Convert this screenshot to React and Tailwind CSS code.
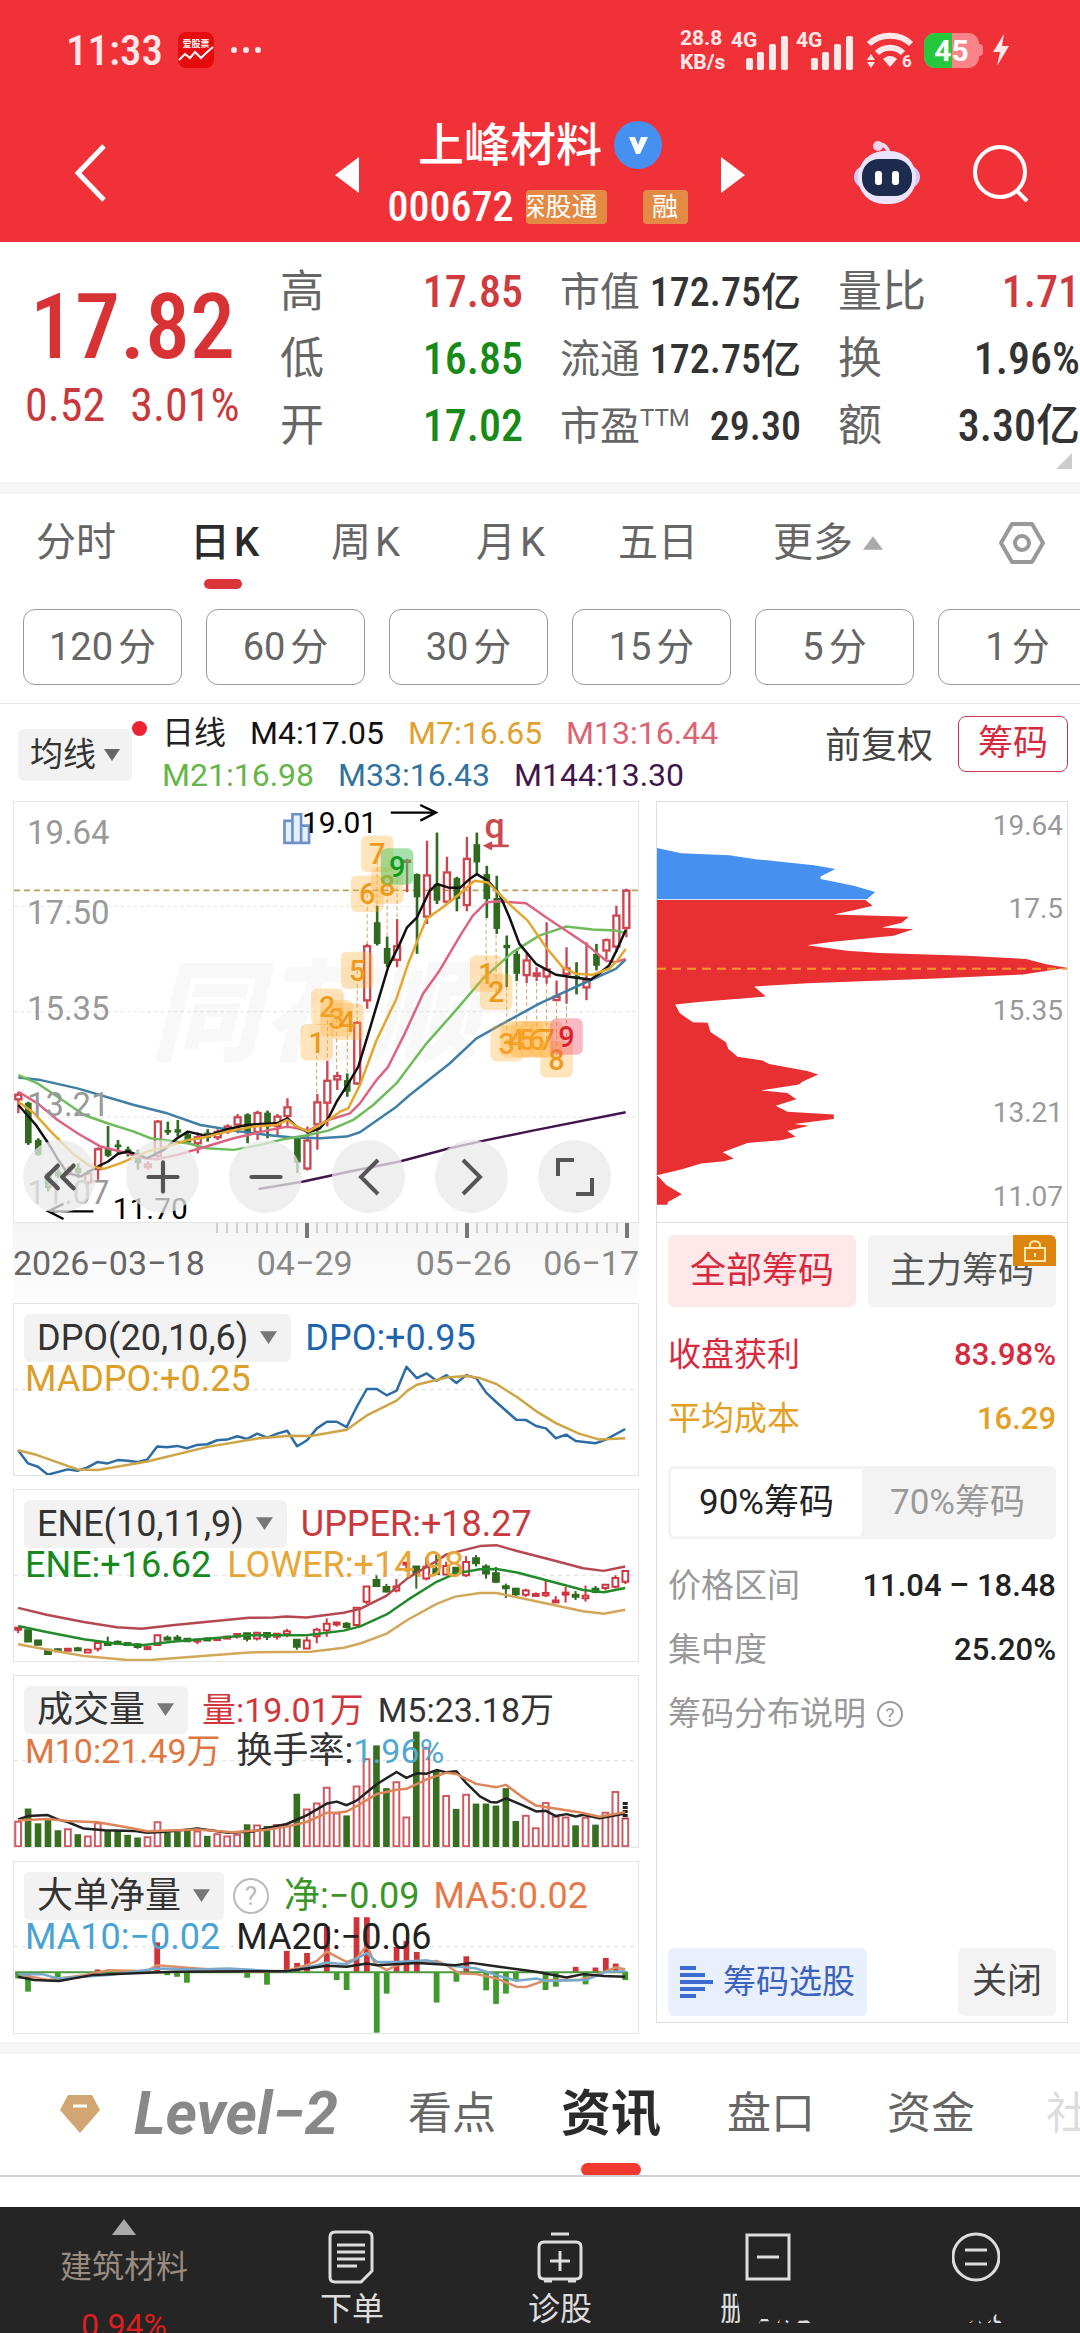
import { ChevronLeft, ChevronRight, ChevronsLeft, Plus, Minus } from "lucide-react";

// [up, high, bodyTop, bodyBottom, low]
const candles = [
  [1, 905, 912, 930, 970], [0, 935, 938, 1060, 1065], [0, 1045, 1050, 1095, 1098], [0, 1145, 1150, 1195, 1205],
  [0, 1135, 1145, 1160, 1165], [1, 1130, 1140, 1150, 1160], [0, 1120, 1135, 1150, 1165], [1, 1140, 1150, 1180, 1185],
  [1, 1072, 1076, 1140, 1170], [0, 1008, 1075, 1098, 1102], [0, 1050, 1064, 1072, 1090], [0, 1070, 1078, 1086, 1100],
  [0, 1080, 1090, 1120, 1140], [1, 1115, 1122, 1134, 1140], [1, 990, 993, 1100, 1104], [0, 995, 1020, 1028, 1035],
  [0, 990, 1018, 1028, 1040], [0, 1028, 1032, 1058, 1062], [1, 1028, 1040, 1062, 1090], [0, 1018, 1028, 1044, 1055],
  [1, 1018, 1024, 1044, 1050], [1, 1003, 1008, 1026, 1032], [1, 972, 980, 1006, 1030], [0, 970, 973, 1030, 1060],
  [1, 962, 967, 1028, 1050], [0, 962, 968, 1010, 1045], [1, 972, 978, 1010, 1040], [1, 925, 950, 980, 1015],
  [0, 1038, 1042, 1118, 1150], [1, 1010, 1050, 1138, 1142], [1, 912, 935, 1005, 1080], [1, 812, 870, 940, 1010],
  [1, 845, 856, 870, 900], [0, 850, 870, 905, 920], [1, 692, 696, 882, 885], [1, 460, 465, 632, 655],
  [0, 345, 395, 460, 465], [0, 438, 472, 520, 530], [1, 385, 465, 510, 530], [1, 204, 208, 212, 305],
  [0, 248, 250, 320, 490], [1, 150, 252, 380, 400], [0, 125, 280, 330, 340], [1, 198, 243, 335, 340],
  [0, 258, 262, 325, 362], [1, 138, 202, 345, 362], [0, 125, 160, 215, 250], [0, 225, 250, 325, 382],
  [0, 255, 322, 415, 430], [0, 435, 463, 473, 590], [0, 480, 490, 550, 572], [1, 490, 508, 556, 578],
  [1, 530, 547, 558, 572], [1, 395, 535, 560, 580], [1, 570, 617, 631, 633], [1, 470, 532, 552, 640],
  [0, 515, 556, 562, 612], [1, 455, 567, 593, 630], [0, 460, 490, 526, 540], [1, 444, 447, 482, 506],
  [1, 345, 373, 470, 485], [1, 294, 298, 414, 440],
];

const maLines = [
  { color: "#3e7fa3", points: "52,862 120,870 230,895 400,945 500,970 600,1005 720,1025 800,1035 870,1042 960,1045 1040,1040 1080,1027 1190,950 1230,915 1350,820 1430,745 1510,700 1620,640 1750,580 1850,535 1880,507" },
  { color: "#6ebb5b", points: "52,855 110,880 170,920 250,975 320,1000 400,1025 450,1045 560,1060 620,1075 700,1080 780,1065 850,1048 925,1035 985,1022 1060,990 1120,945 1190,880 1280,760 1360,670 1450,565 1540,485 1620,435 1700,408 1780,417 1850,420 1880,428" },
  { color: "#dc6482", points: "52,905 110,940 170,990 230,1030 300,1070 380,1090 430,1105 470,1108 530,1095 600,1075 700,1045 800,1022 862,1010 925,1022 985,990 1050,970 1080,940 1130,870 1165,830 1215,730 1270,610 1320,540 1385,430 1420,375 1460,335 1500,332 1580,338 1640,380 1700,420 1760,460 1820,510 1850,515 1880,505" },
  { color: "#111111", points: "52,945 105,1005 142,1060 172,1110 200,1150 240,1160 292,1130 322,1115 352,1092 382,1085 440,1105 490,1080 530,1045 562,1025 620,1038 680,1018 740,1005 780,1002 830,1000 862,985 890,1010 925,1027 960,1015 985,985 1010,935 1042,885 1075,830 1110,715 1165,530 1200,460 1222,410 1252,380 1290,300 1312,280 1345,290 1380,292 1410,265 1432,250 1465,270 1500,310 1530,380 1560,460 1610,520 1670,553 1730,562 1775,567 1800,550 1830,525 1855,475 1880,418" },
  { color: "#e3a72f", points: "52,935 100,970 150,1025 220,1095 270,1130 310,1137 360,1120 440,1085 500,1070 562,1050 600,1045 680,1025 760,1010 830,1005 862,990 890,1010 925,1025 985,990 1020,965 1045,955 1080,885 1130,750 1190,625 1225,520 1280,385 1330,350 1380,310 1425,270 1465,275 1500,310 1540,350 1585,390 1640,470 1690,530 1730,550 1780,553 1830,535 1855,510 1880,475" },
  { color: "#43154d", points: "775,1198 910,1175 1050,1145 1200,1115 1350,1075 1450,1053 1600,1022 1880,967" },
];

// [x, y, digit, tone, y of the candle it points at]
const marks = [
  [950, 757, "1", "o", 910], [982, 650, "2", "o", 810], [1010, 685, "3", "o", 845], [1042, 695, "4", "o", 850],
  [1072, 540, "5", "o", 690], [1102, 310, "6", "o", 460], [1132, 190, "7", "o", 345], [1162, 285, "8", "o", 438],
  [1192, 228, "9", "g", 385], [1460, 550, "1", "o", 380], [1490, 605, "2", "o", 430], [1522, 760, "3", "o", 590],
  [1552, 748, "4", "o", 572], [1582, 748, "5", "o", 578], [1612, 748, "6", "o", 572], [1642, 748, "7", "o", 580],
  [1672, 808, "8", "o", 633], [1702, 740, "9", "r", 640],
];

const volumes = [
  [1, 515], [0, 477], [0, 522], [0, 512], [0, 543], [1, 538], [0, 555], [1, 560], [1, 520], [0, 545], [0, 545],
  [0, 557], [0, 565], [1, 562], [1, 517], [0, 550], [0, 548], [0, 545], [1, 545], [0, 560], [1, 553], [1, 560],
  [1, 555], [0, 525], [1, 527], [0, 530], [1, 525], [1, 527], [0, 432], [1, 478], [1, 460], [1, 412], [1, 490],
  [0, 498], [1, 408], [1, 325], [0, 285], [0, 415], [1, 395], [1, 502], [0, 243], [1, 290], [0, 362], [1, 437],
  [0, 478], [1, 433], [0, 462], [0, 462], [0, 468], [0, 415], [0, 515], [1, 497], [1, 535], [1, 458], [1, 500],
  [1, 502], [0, 528], [1, 503], [0, 526], [1, 488], [1, 425], [1, 505],
];

const netOrders = [
  [41, 985], [65, 1025], [137, 990], [234, 958], [378, 876], [402, 975], [426, 980], [450, 998], [596, 983],
  [644, 1004], [692, 902], [717, 938], [741, 908], [789, 828], [813, 990], [837, 1020], [861, 800], [886, 800],
  [910, 1149], [934, 1031], [958, 890], [982, 872], [1007, 905], [1055, 1058], [1103, 995], [1127, 918],
  [1175, 1021], [1199, 1062], [1223, 1031], [1247, 990], [1319, 1020], [1344, 1010], [1392, 950], [1416, 1003],
  [1440, 952], [1465, 923], [1489, 940], [1512, 990],
];

const Line = ({ points, color, width = 2.5 }) => (
  <polyline points={points} fill="none" stroke={color} strokeWidth={width} strokeLinejoin="round" vectorEffect="non-scaling-stroke" />
);

const Caret = ({ className }) => (
  <svg viewBox="0 0 16 12" className={className} fill="currentColor"><path d="M0 0h16L8 12z" /></svg>
);

const CaretUp = ({ className }) => (
  <svg viewBox="0 0 24 16" className={className} fill="currentColor"><path d="M12 0l12 16H0z" /></svg>
);

const Signal = () => (
  <div className="relative w-[60px] h-[40px]">
    <span className="absolute left-0 top-0 text-[21px] leading-[20px] font-bold">4G</span>
    <svg viewBox="0 0 42 34" className="absolute left-[15px] bottom-0 w-[42px] h-[34px]" fill="currentColor">
      <rect x="0" y="22" width="7" height="12" rx="2" />
      <rect x="11" y="16" width="7" height="18" rx="2" />
      <rect x="23" y="8" width="7" height="26" rx="2" />
      <rect x="35" y="0" width="7" height="34" rx="2" />
    </svg>
  </div>
);

const StatusBar = () => (
  <div className="flex items-center h-[100px] pl-[66px] pr-[71px] text-[#ffe9e8]">
    <span className="font-['Roboto_Condensed','Roboto',sans-serif] text-[43px] leading-[44px] font-medium">11:33</span>
    <svg viewBox="0 0 36 36" className="w-[36px] h-[36px] ml-[15px]">
      <rect width="36" height="36" rx="8" fill="#e60b0d" />
      <text x="18" y="15" textAnchor="middle" fontSize="9" fontWeight="700" fill="#fff" fontFamily="Noto Sans CJK SC">爱股票</text>
      <path d="M1 28l6-6 5 4 5-6 6 6 5-5 7-6" fill="none" stroke="#fff" strokeWidth="2" />
    </svg>
    <svg viewBox="0 0 32 8" className="w-[32px] h-[8px] ml-[16px]" fill="currentColor">
      <circle cx="4" cy="4" r="3" /><circle cx="16" cy="4" r="3" /><circle cx="28" cy="4" r="3" />
    </svg>
    <div className="ml-auto flex items-center">
      <div className="w-[51px] text-[21px] leading-[24px] font-bold">28.8<br />KB/s</div>
      <Signal />
      <div className="w-[5px]" />
      <Signal />
      <svg viewBox="0 0 48 36" className="w-[48px] h-[36px] ml-[10px]" fill="none" stroke="currentColor" strokeWidth="6">
        <path d="M3 12C14 1 34 1 45 12" />
        <path d="M11 21C18 14 30 14 37 21" />
        <path d="M24 35l-7-8c4-4 10-4 14 0z" fill="currentColor" stroke="none" />
        <path d="M5 22l4 6H1zM5 36l4-6H1z" fill="currentColor" stroke="none" />
        <text x="36" y="35" fontSize="17" fontWeight="700" fill="currentColor" stroke="none" fontFamily="Roboto">6</text>
      </svg>
      <div className="relative w-[55px] h-[35px] ml-[10px] rounded-[11px] overflow-hidden bg-[#f9848a]">
        <div className="w-[28px] h-full bg-[#26c73d]" />
        <span className="absolute inset-0 text-center text-[30px] leading-[35px] font-bold text-white">45</span>
      </div>
      <div className="w-[4px] h-[12px] rounded-r bg-[#f9848a]" />
      <svg viewBox="0 0 16 32" className="w-[16px] h-[32px] ml-[10px]" fill="currentColor"><path d="M11 0L0 18h7l-3 14L16 12H9z" /></svg>
    </div>
  </div>
);

const TopBar = () => (
  <header className="bg-[#f13138] text-white">
    <StatusBar />
    <div className="flex items-center h-[142px] pt-[4px]">
      <button aria-label="返回" className="ml-[73px]">
        <svg viewBox="0 0 34 60" className="w-[34px] h-[60px]" fill="none" stroke="#fff" strokeWidth="5"><path d="M31 3L5 30l26 27" /></svg>
      </button>
      <button aria-label="上一只" className="ml-[228px] mt-[4px]">
        <svg viewBox="0 0 24 36" className="w-[24px] h-[36px]" fill="#fff"><path d="M24 0v36L0 18z" /></svg>
      </button>
      <div className="w-[362px] flex flex-col items-center">
        <div className="flex items-center gap-3 h-[60px]">
          <h1 className="text-[46px] leading-[60px] font-medium">上峰材料</h1>
          <svg viewBox="0 0 48 48" className="w-[48px] h-[48px]">
            <circle cx="24" cy="24" r="24" fill="#4691ef" />
            <path d="M15 16l7 17h4l8-17h-7l-3 8-3-8z" fill="#fff" />
          </svg>
        </div>
        <div className="flex items-center h-[48px] mt-[8px] -ml-[5px]">
          <span className="font-['Roboto_Condensed','Roboto',sans-serif] text-[42px] leading-[48px] font-medium">000672</span>
          <span className="ml-[12px] w-[81px] h-[34px] bg-[#e38b45] rounded-sm overflow-hidden flex justify-end pr-[9px] text-[26px] leading-[34px]"><span className="whitespace-nowrap">深股通</span></span>
          <span className="ml-[36px] w-[45px] h-[34px] bg-[#e38b45] rounded-sm text-center text-[26px] leading-[34px]">融</span>
        </div>
      </div>
      <button aria-label="下一只" className="mt-[4px]">
        <svg viewBox="0 0 24 36" className="w-[24px] h-[36px]" fill="#fff"><path d="M0 0v36l24-18z" /></svg>
      </button>
      <button aria-label="智能助手" className="ml-auto">
        <svg viewBox="0 0 66 64" className="w-[66px] h-[64px]">
          <path d="M24 3c6 0 10 4 11 10" fill="none" stroke="#efd9f5" strokeWidth="4" />
          <circle cx="24" cy="5" r="5" fill="#f6d3ea" />
          <rect x="0" y="25" width="66" height="22" rx="11" fill="#d9c9f8" />
          <rect x="4" y="10" width="58" height="53" rx="26" fill="#ece4ff" />
          <rect x="8" y="18" width="50" height="37" rx="17" fill="#1c2b4e" />
          <rect x="21" y="30" width="7" height="14" rx="3" fill="#fff" />
          <rect x="38" y="30" width="7" height="14" rx="3" fill="#fff" />
        </svg>
      </button>
      <button aria-label="搜索" className="ml-[52px] mr-[50px]">
        <svg viewBox="0 0 58 58" className="w-[58px] h-[58px]" fill="none" stroke="#fff" strokeWidth="4"><circle cx="28" cy="28" r="25" /><path d="M44 46l11 11" /></svg>
      </button>
    </div>
  </header>
);

const stats = [
  ["高", "17.85", "text-[#cf3b3f]", "市值", "172.75亿", "量比", "1.71", "text-[#cf3b3f]"],
  ["低", "16.85", "text-[#188a18]", "流通", "172.75亿", "换", "1.96%", "text-[#333]"],
  ["开", "17.02", "text-[#188a18]", "市盈", "29.30", "额", "3.30亿", "text-[#333]"],
];

const Quote = () => (
  <section className="relative flex h-[240px] border-b-12 border-[#f5f5f5] box-content border-solid font-['Roboto_Condensed','Roboto','Noto_Sans_CJK_SC',sans-serif]">
    <div className="w-[280px] shrink-0 pt-[40px] text-[#d93235]">
      <div className="pl-[30px] text-[90px] leading-[92px] font-medium">17.82</div>
      <div className="pl-[25px] mt-[6px] flex gap-[25px] text-[46px] leading-[50px] text-[#c9393c]"><span>0.52</span><span>3.01%</span></div>
    </div>
    <div className="flex-1 pt-[17px]">
      {stats.map(([a, av, ac, b, bv, c, cv, cc]) => (
        <div key={a} className="flex items-center h-[67px] text-[40px] leading-[67px] text-[#333]">
          <span className="text-[44px] text-[#666]">{a}</span>
          <span className={`flex-1 text-right text-[44px] font-medium ${ac}`}>{av}</span>
          <div className="w-[241px] ml-[37px] flex justify-between">
            <span className="flex text-[#666]">{b}{b === "市盈" && <span className="text-[24px] leading-[50px] font-['Roboto']">TTM</span>}</span>
            <span className="font-medium">{bv}</span>
          </div>
          <span className="w-[92px] ml-[37px] text-[44px] text-[#666]">{c}</span>
          <span className={`w-[150px] text-right text-[44px] font-medium ${cc}`}>{cv}</span>
        </div>
      ))}
    </div>
    <svg viewBox="0 0 16 16" className="absolute right-[8px] bottom-[13px] w-[16px] h-[16px]"><path d="M16 0v16H0z" fill="#ccc" /></svg>
  </section>
);

const PeriodTabs = () => (
  <nav className="flex items-center h-[97px] pl-[36px] text-[40px] leading-[60px] text-[#666]">
    <button className="w-[154px] text-left">分时</button>
    <button className="relative flex gap-[4px] w-[141px] font-medium text-[#2b2b2b]">
      <span>日</span><span>K</span>
      <span className="absolute left-[14px] top-[66px] w-[38px] h-[10px] rounded-full bg-[#da3538]" />
    </button>
    <button className="flex gap-[4px] w-[145px]"><span>周</span><span>K</span></button>
    <button className="flex gap-[4px] w-[142px]"><span>月</span><span>K</span></button>
    <button className="w-[155px] text-left">五日</button>
    <button className="flex items-center gap-[10px]">更多<CaretUp className="w-[20px] h-[16px] text-[#aaa]" /></button>
    <button aria-label="设置" className="ml-auto mr-[35px]">
      <svg viewBox="0 0 46 42" className="w-[46px] h-[42px]" fill="none" stroke="#999" strokeWidth="4" strokeLinejoin="round"><path d="M13 2h20l11 19-11 19H13L2 21z" /><circle cx="23" cy="21" r="7" /></svg>
    </button>
  </nav>
);

const MinuteChips = () => (
  <div className="flex gap-6 pl-[23px] pt-[18px] pb-[18px] overflow-hidden border-b border-[#e6e6e6]">
    {["120", "60", "30", "15", "5", "1"].map((m) => (
      <button key={m} className="flex justify-center gap-[5px] w-[159px] h-[76px] shrink-0 rounded-xl border border-[#999] text-[38px] leading-[74px] text-[#666]"><span>{m}</span><span>分</span></button>
    ))}
  </div>
);

const MaLegend = () => (
  <div className="flex h-[97px]">
    <div className="relative ml-[18px] mt-[25px] w-[114px] h-[52px]">
      <button className="w-full h-full flex items-center justify-center gap-2 rounded-md bg-[#f2f2f2] text-[33px] leading-[52px] text-[#333]">均线<Caret className="w-[16px] h-[12px] text-[#666]" /></button>
      <span className="absolute -right-[15px] -top-[8px] w-[15px] h-[15px] rounded-full bg-[#ec2330]" />
    </div>
    <div className="ml-[30px] mt-[8px] text-[32px] leading-[42px] whitespace-nowrap">
      <div className="flex gap-[24px]"><span className="text-[#222]">日线</span><span className="text-[#111]">M4:17.05</span><span className="text-[#dfa12f]">M7:16.65</span><span className="text-[#db6474]">M13:16.44</span></div>
      <div className="flex gap-[24px]"><span className="text-[#65b548]">M21:16.98</span><span className="text-[#31739e]">M33:16.43</span><span className="text-[#43154d]">M144:13.30</span></div>
    </div>
    <button className="ml-auto mt-[12px] h-[60px] text-[36px] leading-[60px] text-[#444]">前复权</button>
    <button className="ml-[25px] mr-[12px] mt-[12px] w-[110px] h-[56px] rounded-lg border border-[#c9394b] text-[35px] leading-[54px] text-[#d82a3e]">筹码</button>
  </div>
);

const markTones = {
  o: ["#ffb03a", "#ee9a1c", 0.34],
  g: ["#4ec45a", "#0f9d20", 0.5],
  r: ["#f0506a", "#e0212b", 0.4],
};

const roundBtn = "w-[73px] h-[73px] rounded-full bg-[#e9e9e9]/75 text-[#555] flex items-center justify-center";

const KChart = () => (
  <div className="relative border border-[#e4e4e4]">
    <svg viewBox="39 33 1878 1263" className="block w-full" fontFamily="Roboto, Noto Sans CJK SC, sans-serif">
      <text x="450" y="785" fontSize="330" fontWeight="900" fontStyle="italic" fill="#f8f8f8">同花顺</text>
      <g stroke="#d6d6d6" strokeWidth="2" strokeDasharray="12 8"><path d="M39 347h1878M39 664h1878M39 981h1878" /></g>
      <path d="M39 299h1878" stroke="#b79f5c" strokeWidth="5" strokeDasharray="18 12" />
      {marks.map(([x, y, n, , to]) => (
        <path key={x} d={`M${x} ${y}V${to}`} stroke="#cfa862" strokeWidth="3" strokeDasharray="12 8" />
      ))}
      {candles.map(([up, h, t, b, l], i) => {
        const x = 52 + i * 30;
        return up ? (
          <g key={i} stroke="#cb4650" strokeWidth="7" fill="none">
            <path d={`M${x} ${h}V${t}M${x} ${b}V${l}`} />
            <rect x={x - 9} y={t + 2} width="18" height={Math.max(b - t - 4, 3)} />
          </g>
        ) : (
          <g key={i} fill="#2f6a1f">
            <rect x={x - 4} y={h} width="8" height={l - h} />
            <rect x={x - 10} y={t} width="20" height={b - t} />
          </g>
        );
      })}
      {maLines.map((l) => <Line key={l.color} {...l} />)}
      {marks.map(([x, y, n, tone]) => (
        <g key={x}>
          <rect x={x - 49} y={y - 56} width="98" height="110" rx="18" fill={markTones[tone][0]} opacity={markTones[tone][2]} />
          <text x={x} y={y + 31} textAnchor="middle" fontSize="87" fontWeight="500" fill={markTones[tone][1]}>{n}</text>
        </g>
      ))}
      <g fontSize="99" fill="#999">
        <text x="78" y="160">19.64</text>
        <text x="78" y="400">17.50</text>
        <text x="78" y="688">15.35</text>
        <text x="78" y="979">13.21</text>
        <text x="78" y="1243">11.07</text>
      </g>
      <g fill="#e4f1ff" stroke="#6f8fcb" strokeWidth="8"><path d="M853 90h24v66h-24zM903 104h24v52h-24zM877 70h26v86h-26z" /></g>
      <text x="906" y="125" fontSize="90" fill="#000">19.01</text>
      <path d="M1173 65h135M1262 42l47 23-47 24" fill="none" stroke="#000" strokeWidth="7" />
      <text x="1455" y="142" fontSize="108" fontWeight="500" fill="#c94a52">q</text>
      <path d="M1528 165h-62" stroke="#c94a52" strokeWidth="8" /><path d="M1450 165l28-14v28z" fill="#c94a52" />
      <path d="M278 1265H142M188 1242l-46 23 46 23" fill="none" stroke="#000" strokeWidth="7" />
      <text x="336" y="1288" fontSize="90" fill="#000">11.70</text>
    </svg>
    <div className="absolute left-[9px] right-[27px] top-[338px] flex justify-between">
      <button aria-label="最左" className={roundBtn}><ChevronsLeft size={54} strokeWidth={2} /></button>
      <button aria-label="放大" className={roundBtn}><Plus size={50} strokeWidth={2} /></button>
      <button aria-label="缩小" className={roundBtn}><Minus size={50} strokeWidth={2} /></button>
      <button aria-label="左移" className={roundBtn}><svg viewBox="0 0 22 38" className="w-[22px] h-[38px]" fill="none" stroke="currentColor" strokeWidth="4"><path d="M20 2L3 19l17 17" /></svg></button>
      <button aria-label="右移" className={roundBtn}><svg viewBox="0 0 22 38" className="w-[22px] h-[38px]" fill="none" stroke="currentColor" strokeWidth="4"><path d="M2 2l17 17L2 36" /></svg></button>
      <button aria-label="全屏" className={roundBtn}>
        <svg viewBox="0 0 38 38" className="w-[38px] h-[38px]" fill="none" stroke="currentColor" strokeWidth="4"><path d="M2 18V2h16M36 20v16H20" /></svg>
      </button>
    </div>
  </div>
);

const DateAxis = () => (
  <div className="h-[80px] bg-linear-to-b from-[#f5f5f5] to-[#fdfdfd]">
    <svg viewBox="0 0 626 16" className="block w-full">
      {Array.from({ length: 42 }, (_, i) => {
        const big = i === 9 || i === 25 || i === 41;
        return <path key={i} d={`M${204 + i * 10} 0V${big ? 15 : 10}`} stroke={big ? "#777" : "#aaa"} strokeWidth={big ? 4 : 1} />;
      })}
    </svg>
    <div className="flex pt-[4px] text-[34px] leading-[40px] text-[#888] whitespace-nowrap">
      <span className="text-[#666]">2026−03−18</span>
      <span className="ml-[52px]">04−29</span>
      <span className="ml-[63px]">05−26</span>
      <span className="ml-auto">06−17</span>
    </div>
  </div>
);

const Panel = ({ name, viewBox, grid, line1, line2, help, valueSize = "text-[36px]", children }) => (
  <div className="relative h-[173px] border border-[#e4e4e4] text-[36px] whitespace-nowrap">
    <svg viewBox={viewBox} preserveAspectRatio="none" className="absolute inset-0 w-full h-full">
      <path d={`M31 ${grid}h1512`} stroke="#ddd" strokeDasharray="4 4" vectorEffect="non-scaling-stroke" />
      {children}
    </svg>
    <div className="relative flex items-center pl-[10px] pt-[10px]">
      <button className="flex items-center gap-[12px] h-[48px] pl-[13px] pr-[14px] rounded-md bg-[#f2f2f2] text-[#333] leading-[48px]">{name}<Caret className="w-[17px] h-[13px] text-[#777]" /></button>
      {help && <svg viewBox="0 0 38 38" className="w-[38px] h-[38px] ml-[8px]"><circle cx="19" cy="19" r="17" fill="none" stroke="#bbb" strokeWidth="2" /><text x="19" y="28" textAnchor="middle" fontSize="26" fill="#bbb" fontFamily="Roboto">?</text></svg>}
      <div className={`flex ml-[14px] gap-[14px] leading-[48px] ${valueSize}`}>{line1.map(([t, c]) => <span key={t} className={c}>{t}</span>)}</div>
    </div>
    <div className={`relative flex pl-[11px] gap-[16px] leading-[34px] ${valueSize}`}>{line2.map(([t, c]) => <span key={t} className={c}>{t}</span>)}</div>
  </div>
);

const px = (i) => 41 + i * 24.12;

const DpoPanel = () => (
  <Panel name="DPO(20,10,6)" viewBox="31 248 1512 517" grid={507} line1={[["DPO:+0.95", "text-[#1d66ad]"]]} line2={[["MADPO:+0.25", "text-[#dba02a]"]]}>
    <Line color="#2c6ca5" points="41,690 65,730 89,740 113,764 161,748 185,752 209,742 233,726 258,730 282,720 306,722 330,726 354,718 378,679 402,681 426,677 450,684 475,674 499,672 523,660 547,658 572,648 596,656 620,640 645,652 669,640 693,631 717,678 741,660 765,624 789,604 813,604 837,620 861,560 886,505 910,505 934,524 958,510 982,438 1007,472 1031,458 1055,480 1079,463 1103,487 1127,463 1151,472 1175,516 1200,545 1248,598 1272,599 1296,617 1320,624 1344,654 1369,643 1392,662 1440,669 1465,658 1512,626" />
    <Line color="#cda546" points="41,690 80,702 185,748 235,750 354,724 500,680 620,655 700,646 750,647 837,628 886,585 958,540 985,510 1007,492 1079,470 1127,466 1160,472 1200,490 1248,528 1300,575 1344,608 1400,640 1450,658 1512,654" />
  </Panel>
);

const EnePanel = () => (
  <Panel name="ENE(10,11,9)" viewBox="31 805 1512 518" grid={1063} line1={[["UPPER:+18.27", "text-[#c93a3f]"]]} line2={[["ENE:+16.62", "text-[#168a1d]"], ["LOWER:+14.98", "text-[#e8a637]"]]}>
    {candles.map(([up, h, t, b, l], i) => {
      const y = (v) => 1050 + (v - 297) * 0.28;
      const x = px(i);
      return (
        <g key={i} stroke={up ? "#cf3540" : "#2f6a1f"} fill={up ? "#fff" : "#2f6a1f"} strokeWidth="2">
          <path d={`M${x} ${y(h)}V${y(l)}`} vectorEffect="non-scaling-stroke" />
          <rect x={x - 7} y={y(t)} width="14" height={Math.max(y(b) - y(t), 6)} vectorEffect="non-scaling-stroke" />
        </g>
      );
    })}
    <Line color="#b5484f" points="41,1162 110,1183 200,1205 280,1221 340,1225 420,1214 600,1192 660,1191 690,1188 740,1191 830,1177 870,1165 934,1125 985,1072 1055,1020 1079,1000 1160,975 1200,972 1250,990 1344,1020 1410,1042 1460,1050 1512,1037" />
    <Line color="#238a2b" points="41,1217 110,1235 200,1257 280,1271 340,1275 420,1264 600,1245 740,1245 830,1231 870,1218 934,1182 985,1138 1055,1083 1100,1058 1160,1045 1200,1044 1250,1055 1344,1086 1410,1108 1460,1115 1512,1102" />
    <Line color="#d1a75a" points="41,1272 110,1288 200,1308 300,1319 360,1320 600,1297 750,1295 830,1283 870,1270 934,1240 985,1198 1055,1150 1100,1128 1160,1117 1200,1117 1250,1130 1344,1155 1410,1172 1460,1180 1512,1168" />
  </Panel>
);

const VolumePanel = () => (
  <Panel name="成交量" viewBox="31 74 1512 520" grid={332} valueSize="text-[34px]" line1={[["量:19.01万", "text-[#d0363c]"], ["M5:23.18万", "text-[#333]"]]} line2={[["M10:21.49万", "text-[#de7742]"], ["换手率:", "text-[#333] text-[36px]"], ["1.96%", "text-[#52a9d0] -ml-[16px]"]]}>
    {volumes.map(([up, y], i) =>
      up ? (
        <rect key={i} x={px(i) - 7} y={y + 2} width="14" height={590 - y} fill="#fff" stroke="#cf5a63" strokeWidth="2" vectorEffect="non-scaling-stroke" />
      ) : (
        <rect key={i} x={px(i) - 8} y={y} width="16" height={594 - y} fill="#386e20" />
      )
    )}
    <path d="M1512 457v50" stroke="#222" strokeWidth="5" strokeDasharray="3 1" vectorEffect="non-scaling-stroke" />
    <Line color="#222" points="41,510 65,500 113,497 137,510 161,518 200,538 250,543 320,545 354,551 400,548 475,538 550,551 610,547 650,535 692,524 740,498 789,462 813,456 837,467 861,453 910,403 958,366 982,384 1007,370 1031,371 1055,360 1079,367 1103,364 1127,400 1160,440 1185,457 1200,459 1223,446 1260,465 1296,486 1320,484 1344,500 1370,494 1392,501 1410,496 1450,507 1512,492" />
    <Line color="#dd8458" points="41,513 113,509 161,515 234,519 300,533 354,546 475,541 560,549 640,542 692,532 740,518 789,490 813,490 837,486 861,470 910,433 958,420 982,417 1031,388 1079,368 1103,372 1151,402 1200,412 1223,405 1260,440 1296,468 1400,488 1450,502 1512,488" />
  </Panel>
);

const NetOrderPanel = () => (
  <Panel name="大单净量" help viewBox="31 633 1512 517" grid={889} line1={[["净:−0.09", "text-[#3a9628]"], ["MA5:0.02", "text-[#e6794a]"]]} line2={[["MA10:−0.02", "text-[#4ba3d4]"], ["MA20:−0.06", "text-[#222]"]]}>
    {netOrders.map(([x, y]) => (
      <rect key={x} x={x - 7} y={Math.min(y, 966)} width="14" height={Math.abs(y - 966)} fill={y < 966 ? "#cf3338" : "#3f9a2c"} />
    ))}
    <path d="M34 966H1518" stroke="#4c9a3e" strokeWidth="2" vectorEffect="non-scaling-stroke" />
    <Line color="#dc8e66" points="41,972 113,990 200,975 260,960 354,963 378,945 475,955 600,965 692,962 740,945 765,932 789,903 813,920 837,935 861,925 886,885 905,940 934,960 958,945 1007,935 1055,932 1079,945 1110,970 1151,972 1200,985 1248,1010 1272,1011 1320,990 1400,990 1440,975 1489,952 1512,957" />
    <Line color="#78a9cb" points="41,972 100,972 137,985 260,975 378,955 475,958 550,955 690,965 765,945 789,937 813,940 837,942 886,908 910,935 958,935 1031,930 1079,945 1151,955 1200,975 1248,992 1296,985 1320,993 1416,990 1465,965 1512,963" />
    <Line color="#222" points="41,980 80,990 140,993 220,975 354,968 420,965 690,963 789,947 837,950 886,940 910,945 1007,938 1100,945 1140,938 1180,945 1296,965 1370,982 1410,972 1460,978 1512,980" />
  </Panel>
);

const Row = ({ label, value, labelColor, valueColor }) => (
  <div className="flex justify-between items-center h-16 text-[33px] leading-[64px]">
    <span className={labelColor}>{label}</span>
    <span className={`text-[31px] font-medium ${valueColor}`}>{value}</span>
  </div>
);

const ChipPanel = () => (
  <aside className="flex flex-col h-[1222px] border border-[#dedede]">
    <div className="relative h-[421px] border-b border-[#dedede]">
      <svg viewBox="47 321 1236 1222" preserveAspectRatio="none" className="absolute inset-0 w-full h-full">
        <path fill="#4691ef" d="M47 455L120 470 265 476 350 488 520 505 585 516 540 538 540 545 640 565 705 583 680 604H47z" />
        <path fill="#e83032" d="M47 606H675L697 623 640 636 580 648 806 655 785 672 725 686 820 691 760 710 570 728 500 738 620 754 720 760 980 768 1160 778 1220 793 1283 803 1150 823 870 835 500 848 340 858 375 887 180 902 102 910 115 935 155 962 200 963 208 990 255 1020 262 1040 290 1062 365 1073 385 1083 500 1104 533 1114 485 1135 475 1143 360 1160 440 1168 467 1186 405 1205 440 1222 580 1230 580 1243 460 1258 505 1263 440 1278 465 1295 420 1305 320 1313 245 1340 278 1358 250 1366 180 1373 120 1390 47 1407 75 1435 122 1462 80 1485 78 1493H47z" />
        <path d="M47 806H1283" stroke="#f2962c" strokeWidth="2" strokeDasharray="9 6" vectorEffect="non-scaling-stroke" />
      </svg>
      <div className="relative flex flex-col items-end pr-[4px] pt-[8px] text-[28px] leading-[32px] text-[#999]">
        <span>19.64</span>
        <span className="mt-[51px]">17.5</span>
        <span className="mt-[70px]">15.35</span>
        <span className="mt-[70px]">13.21</span>
        <span className="mt-[52px]">11.07</span>
      </div>
    </div>
    <div className="flex-1 flex flex-col px-[11px] pt-[12px] pb-[6px]">
      <div className="grid grid-cols-2 gap-3 text-[36px] leading-[72px]">
        <button className="h-[72px] rounded-md bg-[#ffe8e9] text-[#d82a3e]">全部筹码</button>
        <button className="relative h-[72px] rounded-md bg-[#f3f3f3] text-[#555]">
          主力筹码
          <span className="absolute right-0 top-0 w-[43px] h-[31px] bg-[#dc850e] rounded-tr-md flex items-center justify-center">
            <svg viewBox="0 0 24 24" className="w-[24px] h-[24px]" fill="none" stroke="#ffe7b0" strokeWidth="2"><rect x="2" y="9" width="20" height="13" /><path d="M7 9V6c0-5 10-5 10 0v3M12 14v4" /></svg>
          </span>
        </button>
      </div>
      <div className="mt-[16px]">
        <Row label="收盘获利" value="83.98%" labelColor="text-[#d82a3e]" valueColor="text-[#d82a3e]" />
        <Row label="平均成本" value="16.29" labelColor="text-[#e2a024]" valueColor="text-[#e2a024]" />
      </div>
      <div className="mt-[15px] grid grid-cols-2 h-[73px] p-[3px] rounded-md bg-[#f3f3f3] text-[35px] leading-[67px]">
        <button className="rounded bg-white text-[#222]">90%筹码</button>
        <button className="text-[#999]">70%筹码</button>
      </div>
      <div className="mt-[15px]">
        <Row label="价格区间" value="11.04 – 18.48" labelColor="text-[#999]" valueColor="text-[#222]" />
        <Row label="集中度" value="25.20%" labelColor="text-[#999]" valueColor="text-[#222]" />
        <div className="flex items-center gap-[10px] h-16 text-[33px] leading-[64px] text-[#999]">
          筹码分布说明
          <svg viewBox="0 0 28 28" className="w-[28px] h-[28px]"><circle cx="14" cy="14" r="12" fill="none" stroke="#999" strokeWidth="2" /><text x="14" y="21" textAnchor="middle" fontSize="19" fill="#999" fontFamily="Roboto">?</text></svg>
        </div>
      </div>
      <div className="mt-auto flex justify-between text-[33px] leading-[68px]">
        <button className="flex items-center gap-[10px] px-[12px] h-[68px] rounded-md bg-[#e8effd] text-[#3c62bd]">
          <svg viewBox="0 0 33 32" className="w-[33px] h-[32px]" stroke="#3f6bd0" strokeWidth="4"><path d="M0 2h16M0 9h25M0 16h33M0 23h25M0 30h16" /></svg>
          筹码选股
        </button>
        <button className="h-[68px] px-[14px] rounded-md bg-[#f3f3f3] text-[#444] text-[35px]">关闭</button>
      </div>
    </div>
  </aside>
);

const InfoTabs = () => (
  <nav className="flex items-center h-[123px] border-b-2 border-[#d2d2d6] text-[44px] leading-[60px] text-[#666] overflow-hidden whitespace-nowrap">
    <svg viewBox="0 0 40 38" className="w-[40px] h-[38px] ml-[60px] shrink-0"><path d="M8 0h24l8 15-20 23L0 15z" fill="#d2a673" /><path d="M13 11h14" stroke="#fff" strokeWidth="3" /></svg>
    <button className="ml-[34px] w-[274px] shrink-0 text-left text-[60px] font-bold italic text-[#888]">Level−2</button>
    <button className="w-[153px] shrink-0 text-left">看点</button>
    <button className="relative w-[166px] shrink-0 text-left text-[50px] font-bold text-[#2b2b2b]">
      资讯
      <span className="absolute left-[20px] top-[79px] w-[60px] h-[13px] rounded-full bg-[#f2392f]" />
    </button>
    <button className="w-[160px] shrink-0 text-left">盘口</button>
    <button className="w-[159px] shrink-0 text-left">资金</button>
    <button className="shrink-0 text-left text-[#ddd]">社区</button>
  </nav>
);

const barItems = [
  ["下单", <path d="M7 2h32q5 0 5 5v34l-11 11H7q-5 0-5-5V7q0-5 5-5zM9 15h28M9 22h28M9 29h28M9 36h20" />],
  ["诊股", <path d="M8 12h32q5 0 5 5v27q0 5-5 5H8q-5 0-5-5V17q0-5 5-5zM15 4h18M24 21v20M14 31h20M8 51h8M32 51h8" />],
  ["删自选", <path d="M3 5h42v44H3zM13 27h22" />],
  ["功能", <path d="M24 4a23 23 0 1 1 0 46a23 23 0 1 1 0-46zM13 20h22M13 34h22" />],
];

const BottomBar = () => (
  <footer className="relative flex h-[127px] overflow-hidden bg-[#252525] text-[#ddd] text-[32px] leading-[40px]">
    <button className="w-[248px] shrink-0 flex flex-col items-center self-start pt-[12px]">
      <CaretUp className="w-[26px] h-[16px] shrink-0 text-[#aaa]" />
      <span className="mt-[12px] text-[#9a8b80]">建筑材料</span>
      <span className="mt-[18px] text-[#df1f1f]">0.94%</span>
    </button>
    {barItems.map(([label, icon]) => (
      <button key={label} className="flex-1 flex flex-col items-center self-start pt-[23px]">
        <svg viewBox="0 0 48 54" className="w-[48px] h-[54px] shrink-0" fill="none" stroke="#ddd" strokeWidth="3">{icon}</svg>
        <span className="mt-[5px]">{label}</span>
      </button>
    ))}
    <svg viewBox="0 0 350 50" className="absolute right-0 bottom-0 w-[350px] h-[50px]" fill="#252525">
      <path d="M6 4H350V50H278L266 30L255 42L246 34L224 50H90L74 32L64 42L52 32L44 44L34 30L24 48L12 46z" />
    </svg>
  </footer>
);

const App = () => {
  return (
    <div className="w-full overflow-hidden bg-white font-['Roboto','Noto_Sans_CJK_SC',sans-serif]">
      <TopBar />
      <Quote />
      <PeriodTabs />
      <MinuteChips />
      <MaLegend />
      <main className="grid grid-cols-[626fr_412fr] gap-[17px] pl-[13px] pr-[12px] pb-[8px] items-start">
        <div>
          <KChart />
          <DateAxis />
          <div className="flex flex-col gap-[13px]">
            <DpoPanel />
            <EnePanel />
            <VolumePanel />
            <NetOrderPanel />
          </div>
        </div>
        <ChipPanel />
      </main>
      <div className="h-[12px] bg-[#f5f5f5]" />
      <InfoTabs />
      <div className="h-[30px]" />
      <BottomBar />
    </div>
  );
};

export default App;
